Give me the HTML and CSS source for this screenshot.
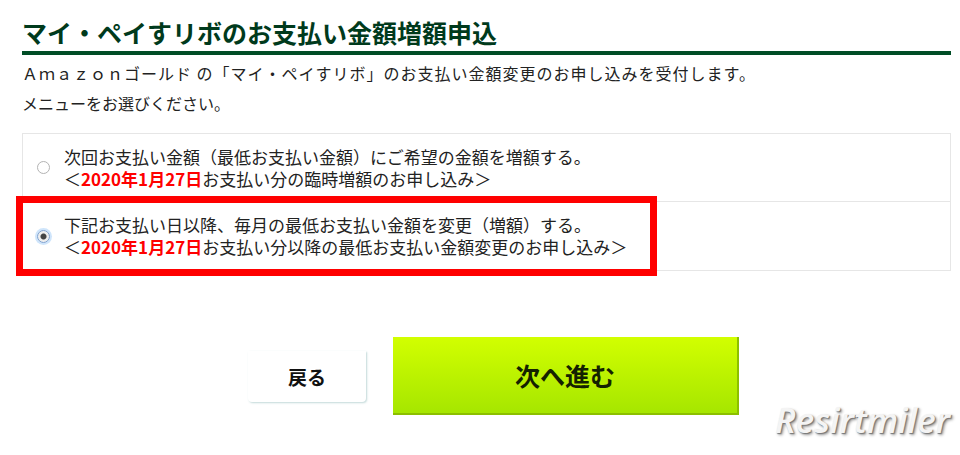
FILE: index.html
```html
<!DOCTYPE html>
<html lang="ja">
<head>
  <meta charset="UTF-8">
  <meta name="viewport" content="width=device-width, initial-scale=1.0">
  <title>マイ・ペイすリボのお支払い金額増額申込</title>
  <link rel="stylesheet" href="styles.css">
</head>
<body>

<div class="page">
  <h1 class="title">マイ・ペイすリボのお支払い金額増額申込</h1>
  <p class="lead lead-wide">Ａｍａｚｏｎゴールド の「マイ・ペイすリボ」のお支払い金額変更のお申し込みを受付します。</p>
  <p class="lead">メニューをお選びください。</p>

  <div class="options">
    <label class="option">
      <input type="radio" name="menu" value="once">
      <span class="option-text">
        <span class="option-line">次回お支払い金額（最低お支払い金額）にご希望の金額を増額する。</span>
        <span class="option-line">＜<em>2020年1月27日</em>お支払い分の臨時増額のお申し込み＞</span>
      </span>
    </label>
    <label class="option">
      <input type="radio" name="menu" value="monthly" checked>
      <span class="option-text">
        <span class="option-line">下記お支払い日以降、毎月の最低お支払い金額を変更（増額）する。</span>
        <span class="option-line">＜<em>2020年1月27日</em>お支払い分以降の最低お支払い金額変更のお申し込み＞</span>
      </span>
      <span class="marker"></span>
    </label>
  </div>

  <div class="actions">
    <button class="btn-back" type="button">戻る</button>
    <button class="btn-next" type="submit">次へ進む</button>
  </div>

  <div class="watermark">Resirtmiler</div>
</div>

</body>
</html>
```

FILE: styles.css
```css
body {
  margin: 0;
  background: #fff;
  color: #222;
  font-family: "Noto Sans CJK JP", "Noto Sans", sans-serif;
}

.page {
  position: relative;
  height: 455px;
  padding: 0 9px 0 22px;
  box-sizing: border-box;
  overflow: hidden;
}

.title {
  margin: 0;
  padding-top: 17px;
  padding-bottom: 4px;
  font-size: 25px;
  line-height: 30px;
  font-weight: bold;
  color: #003a1c;
  border-bottom: 4px solid #004d26;
}

.lead {
  margin: 7px 0 0;
  font-size: 16px;
  line-height: 23px;
  color: #222;
}

.lead-wide {
  letter-spacing: 1px;
}

.lead + .lead {
  margin-top: 7px;
}

.options {
  margin-top: 18px;
  border: 1px solid #e6e6e6;
}

.option {
  position: relative;
  display: flex;
  align-items: center;
  gap: 14px;
  height: 67px;
  padding-left: 14px;
  font-size: 17px;
  line-height: 22px;
}

.option + .option {
  border-top: 1px solid #e6e6e6;
  height: 68px;
}

.option input {
  appearance: none;
  flex: none;
  width: 13px;
  height: 13px;
  margin: 0;
  border: 1px solid #b3b3b3;
  border-radius: 50%;
  background: #fff;
}

.option input:checked {
  border-color: #7a9fd0;
  background: radial-gradient(circle, #444 0 2.5px, #eee 3.5px);
  box-shadow: 0 0 0 2px #cfe5fb;
}

.option-text {
  display: flex;
  flex-direction: column;
}

.option-line em {
  font-style: normal;
  font-weight: bold;
  color: #ff0000;
}

.marker {
  position: absolute;
  left: -7px;
  top: -6px;
  width: 641px;
  height: 80px;
  border: 7px solid #ff0000;
  box-sizing: border-box;
  pointer-events: none;
}

.actions {
  display: flex;
  align-items: center;
  gap: 27px;
  margin-top: 66px;
  padding-left: 226px;
}

.btn-back {
  width: 118px;
  height: 51px;
  border: none;
  border-radius: 0 0 4px 4px;
  background: #fff;
  box-shadow: 1px 1px 2px rgba(120, 170, 170, 0.45);
  font-family: inherit;
  font-size: 19px;
  font-weight: bold;
  color: #111;
}

.btn-next {
  width: 346px;
  height: 78px;
  border: none;
  border-right: 2px solid #8cbf00;
  border-bottom: 2px solid #8cbf00;
  background: linear-gradient(#d2ff00, #a6e600);
  font-family: inherit;
  font-size: 25px;
  font-weight: bold;
  color: #142200;
}

.watermark {
  position: absolute;
  right: 10px;
  bottom: 12px;
  font-family: "Open Sans", "DejaVu Sans", sans-serif;
  font-style: italic;
  font-weight: 600;
  font-size: 35px;
  color: #f4f4f4;
  text-shadow: 1px 1px 1px #777, 2px 2px 3px #999;
}
```
